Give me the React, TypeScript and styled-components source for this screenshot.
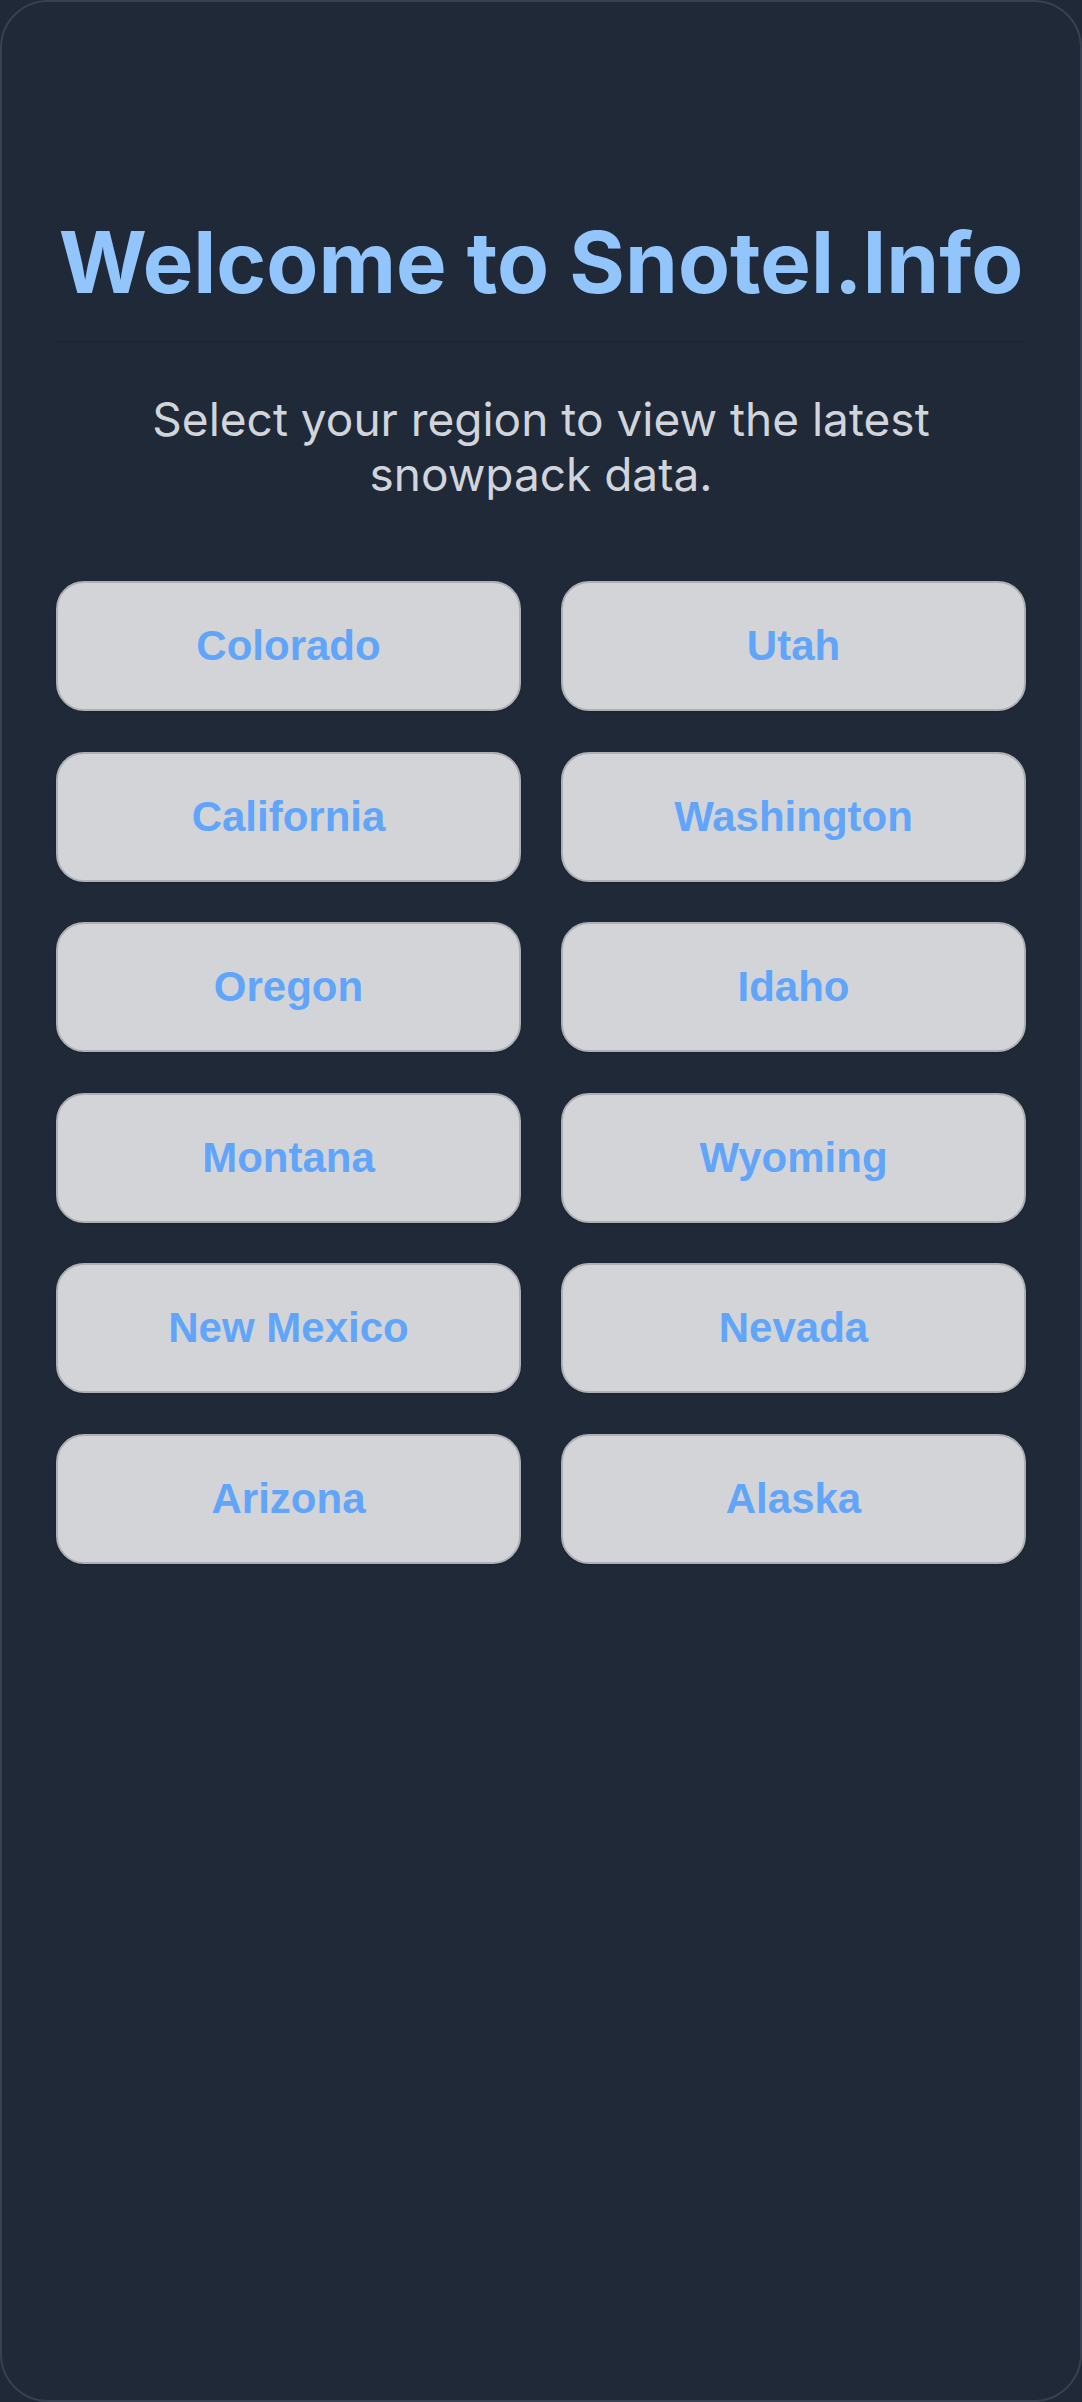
import React from "react";
import styled, { createGlobalStyle } from "styled-components";

const GlobalStyle = createGlobalStyle`
  *, *::before, *::after { box-sizing: border-box; }
  html, body { margin: 0; padding: 0; background: #1f2937; }
  body { font-family: Inter, "Noto Sans", sans-serif; }
`;

const Frame = styled.main`
  min-height: 100vh;
  width: 100%;
  background: #1f2937;
  border: 2px solid #374151;
  border-radius: 48px;
  padding: 210px 54px 0;
  display: flex;
  flex-direction: column;
`;

const Title = styled.h1`
  margin: 0;
  padding-bottom: 27px;
  border-bottom: 1px solid #1b2330;
  font-family: Inter, "Noto Sans", sans-serif;
  font-weight: 700;
  font-size: 85px;
  line-height: 1.2;
  letter-spacing: 0;
  color: #93c5fd;
  text-align: center;
  white-space: nowrap;
`;

const Subtitle = styled.p`
  margin: 50px 0 0;
  font-family: Inter, "Noto Sans", sans-serif;
  font-weight: 400;
  font-size: 46px;
  line-height: 55px;
  color: #d1d5db;
  text-align: center;
`;

const Grid = styled.div`
  margin-top: 79px;
  display: grid;
  grid-template-columns: 1fr 1fr;
  column-gap: 40px;
  row-gap: 40.6px;
`;

const RegionButton = styled.button`
  height: 130px;
  border: 2px solid #aeb0b4;
  border-radius: 28px;
  background: #d2d4d8;
  color: #60a5fa;
  font-family: "Liberation Sans", Arial, sans-serif;
  font-weight: 700;
  font-size: 42px;
  cursor: pointer;
  display: flex;
  align-items: center;
  justify-content: center;
  padding: 0;
  box-shadow: 0 1px 2px rgba(0, 0, 0, 0.15);
`;

const regions = [
  "Colorado",
  "Utah",
  "California",
  "Washington",
  "Oregon",
  "Idaho",
  "Montana",
  "Wyoming",
  "New Mexico",
  "Nevada",
  "Arizona",
  "Alaska",
];

export default function App() {
  return (
    <>
      <GlobalStyle />
      <Frame>
        <Title>Welcome to Snotel.Info</Title>
        <Subtitle>Select your region to view the latest snowpack data.</Subtitle>
        <Grid>
          {regions.map((r) => (
            <RegionButton key={r}>{r}</RegionButton>
          ))}
        </Grid>
      </Frame>
    </>
  );
}
